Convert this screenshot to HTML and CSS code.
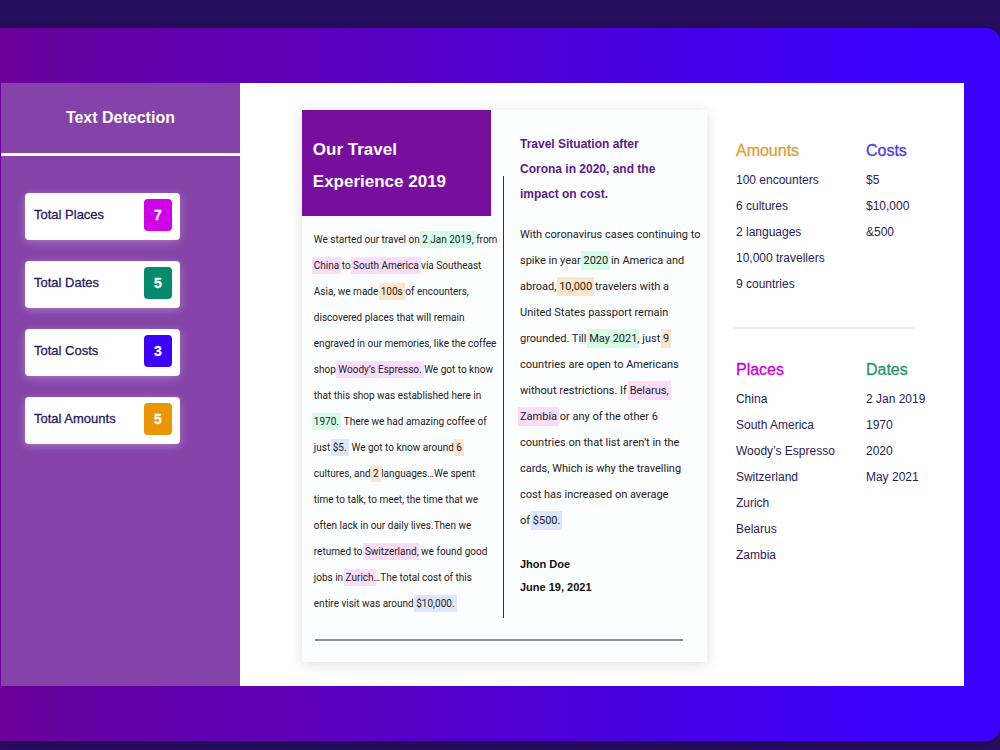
FILE: index.html
```html
<!DOCTYPE html>
<html lang="en">
<head>
<meta charset="utf-8">
<meta name="viewport" content="width=device-width, initial-scale=1">
<title>Text Detection</title>
<link rel="stylesheet" href="styles.css">
</head>
<body>
<div class="frame">
  <div class="panel">
    <aside class="sidebar">
      <h1 class="sidebar-title">Text Detection</h1>
      <ul class="totals">
        <li class="total"><span>Total Places</span><span class="badge badge-place">7</span></li>
        <li class="total"><span>Total Dates</span><span class="badge badge-date">5</span></li>
        <li class="total"><span>Total Costs</span><span class="badge badge-cost">3</span></li>
        <li class="total"><span>Total Amounts</span><span class="badge badge-amount">5</span></li>
      </ul>
    </aside>
    <main class="content">
      <article class="document">
        <div class="columns">
          <section class="story">
            <h2 class="story-title">Our Travel<br>Experience 2019</h2>
            <p class="story-text">We started our travel on <mark class="date">2 Jan 2019,</mark> from<br>
              <mark class="place">China</mark> to <mark class="place">South America</mark> via Southeast<br>
              Asia, we made <mark class="amount">100s</mark> of encounters,<br>
              discovered places that will remain<br>
              engraved in our memories, like the coffee<br>
              shop <mark class="place">Woody’s Espresso.</mark> We got to know<br>
              that this shop was established here in<br>
              <mark class="date">1970.</mark>&nbsp; There we had amazing coffee of<br>
              just <mark class="cost">$5.</mark>&nbsp; We got to know around <mark class="amount">6</mark><br>
              cultures, and <mark class="amount">2</mark> languages…We spent<br>
              time to talk, to meet, the time that we<br>
              often lack in our daily lives.Then we<br>
              returned to <mark class="place">Switzerland</mark>, we found good<br>
              jobs in <mark class="place">Zurich</mark>…The total cost of this<br>
              entire visit was around <mark class="cost">$10,000.</mark></p>
          </section>
          <div class="divider"></div>
          <section class="situation">
            <h2 class="situation-title">Travel Situation after<br>Corona in 2020, and the<br>impact on cost.</h2>
            <p class="situation-text">With coronavirus cases continuing to<br>
              spike in year <mark class="date">2020</mark> in America and<br>
              abroad, <mark class="amount">10,000</mark> travelers with a<br>
              United States passport remain<br>
              grounded. Till <mark class="date">May 2021</mark>, just <mark class="amount">9</mark><br>
              countries are open to Americans<br>
              without restrictions. If <mark class="place">Belarus,</mark><br>
              <mark class="place">Zambia</mark> or any of the other 6<br>
              countries on that list aren’t in the<br>
              cards, Which is why the travelling<br>
              cost has increased on average<br>
              of <mark class="cost">$500.</mark></p>
            <p class="signature">Jhon Doe<br>June 19, 2021</p>
          </section>
        </div>
        <hr class="rule">
      </article>
      <div class="results">
        <div class="group-row">
          <section>
            <h3 class="group-title amounts">Amounts</h3>
            <ul class="group-list"><li>100 encounters</li><li>6 cultures</li><li>2 languages</li><li>10,000 travellers</li><li>9 countries</li></ul>
          </section>
          <section>
            <h3 class="group-title costs">Costs</h3>
            <ul class="group-list"><li>$5</li><li>$10,000</li><li>&amp;500</li></ul>
          </section>
        </div>
        <hr class="separator">
        <div class="group-row">
          <section>
            <h3 class="group-title places">Places</h3>
            <ul class="group-list"><li>China</li><li>South America</li><li>Woody’s Espresso</li><li>Switzerland</li><li>Zurich</li><li>Belarus</li><li>Zambia</li></ul>
          </section>
          <section>
            <h3 class="group-title dates">Dates</h3>
            <ul class="group-list"><li>2 Jan 2019</li><li>1970</li><li>2020</li><li>May 2021</li></ul>
          </section>
        </div>
      </div>
    </main>
  </div>
</div>
</body>
</html>
```
FILE: styles.css
```css
* { box-sizing: border-box; }

body {
  margin: 0;
  min-height: 100vh;
  padding: 28px 0 9px;
  display: flex;
  flex-direction: column;
  background: #250f5e;
  color: #2a1a5e;
  font-family: "Liberation Sans", Arial, sans-serif;
}

h1, h2, h3, p, ul { margin: 0; padding: 0; }
ul { list-style: none; }

.frame {
  flex: 1;
  display: flex;
  padding: 55px 36px 55px 1px;
  border-radius: 0 14px 14px 0;
  background: linear-gradient(90deg, #6c0098 0%, #6300a8 12%, #5c00bb 32%, #4400e8 70%, #3c00ff 92%);
  box-shadow: 0 0 8px #260a48;
}

.panel { flex: 1; display: flex; min-width: 0; background: #fff; }

/* Sidebar */
.sidebar { flex: 0 0 24.8%; background: #8542a8; }

.sidebar-title {
  padding: 19px 0;
  border-bottom: 3px solid #fff;
  color: #fff;
  font-size: 16px;
  line-height: 32px;
  text-align: center;
}

.totals {
  display: flex;
  flex-direction: column;
  gap: 21px;
  padding: 37px 60px 37px 24px;
}

.total {
  display: flex;
  justify-content: space-between;
  padding: 6px 8px 9px 9px;
  border-radius: 4px;
  background: #fff;
  box-shadow: 0 2px 10px rgba(255, 255, 255, 0.3);
  font-size: 13px;
  line-height: 32px;
  -webkit-text-stroke: 0.3px;
}

.badge {
  width: 28px;
  border-radius: 4px;
  color: #fff;
  font-size: 14px;
  font-weight: bold;
  text-align: center;
}

.badge-place { background: #cf00e8; }
.badge-date { background: #068a6c; }
.badge-cost { background: #3c00ff; }
.badge-amount { background: #ea9600; }

/* Document */
.content {
  flex: 1;
  min-width: 0;
  display: flex;
  align-items: flex-start;
  gap: 27px;
  padding: 27px 36px 23px 62px;
}

.document {
  flex: 0 0 64.7%;
  padding-bottom: 21px;
  background: #fcfdff;
  box-shadow: 0 2px 12px rgba(40, 40, 80, 0.16);
  color: #222;
  white-space: nowrap;
}

.columns { display: flex; }
.story { flex: 0 0 46.7%; min-width: 0; padding-bottom: 1px; }

.story-title {
  padding: 24px 11px 18px;
  background: #780e9e;
  color: #fff;
  font-size: 17px;
  line-height: 32px;
}

.story-text {
  padding: 11px 0 0 12px;
  font-family: Roboto, sans-serif;
  font-size: 10px;
  line-height: 26px;
}

.divider {
  flex: 0 0 1px;
  margin: 66px 16px 0 12px;
  background: #333;
}

.situation { flex: 1; min-width: 0; padding-top: 22px; }

.situation-title {
  color: #5b1a8b;
  font-size: 12px;
  line-height: 25px;
}

.situation-text {
  padding-top: 15px;
  font-family: Roboto, sans-serif;
  font-size: 11px;
  line-height: 26px;
}

.signature {
  padding-top: 19px;
  color: #111;
  font-size: 11px;
  font-weight: bold;
  line-height: 23px;
}

mark {
  margin: 0 -2px;
  padding: 3px 2px;
  color: inherit;
}

.date { background: #d5fbe9; }
.place { background: #fbdcfb; }
.amount { background: #fde5cb; }
.cost { background: #dde6fc; }

.rule {
  margin: 21px 24px 0 13px;
  border: 0;
  border-top: 2px solid #8b8f91;
}

/* Results */
.results { flex: 1; padding: 25px 0 0 2px; white-space: nowrap; }

.group-row { display: grid; grid-template-columns: 130px 1fr; }

.group-title {
  font-size: 16px;
  font-weight: normal;
  line-height: 32px;
  -webkit-text-stroke: 0.3px;
}

.amounts { color: #e0a030; }
.costs { color: #4a3ae8; }
.places { color: #c800d8; }
.dates { color: #2a9270; }

.group-list { font-size: 12px; line-height: 26px; }

.separator {
  margin: 30px 14px 25px -2px;
  border: 0;
  border-top: 2px solid #eaecf2;
}
```
